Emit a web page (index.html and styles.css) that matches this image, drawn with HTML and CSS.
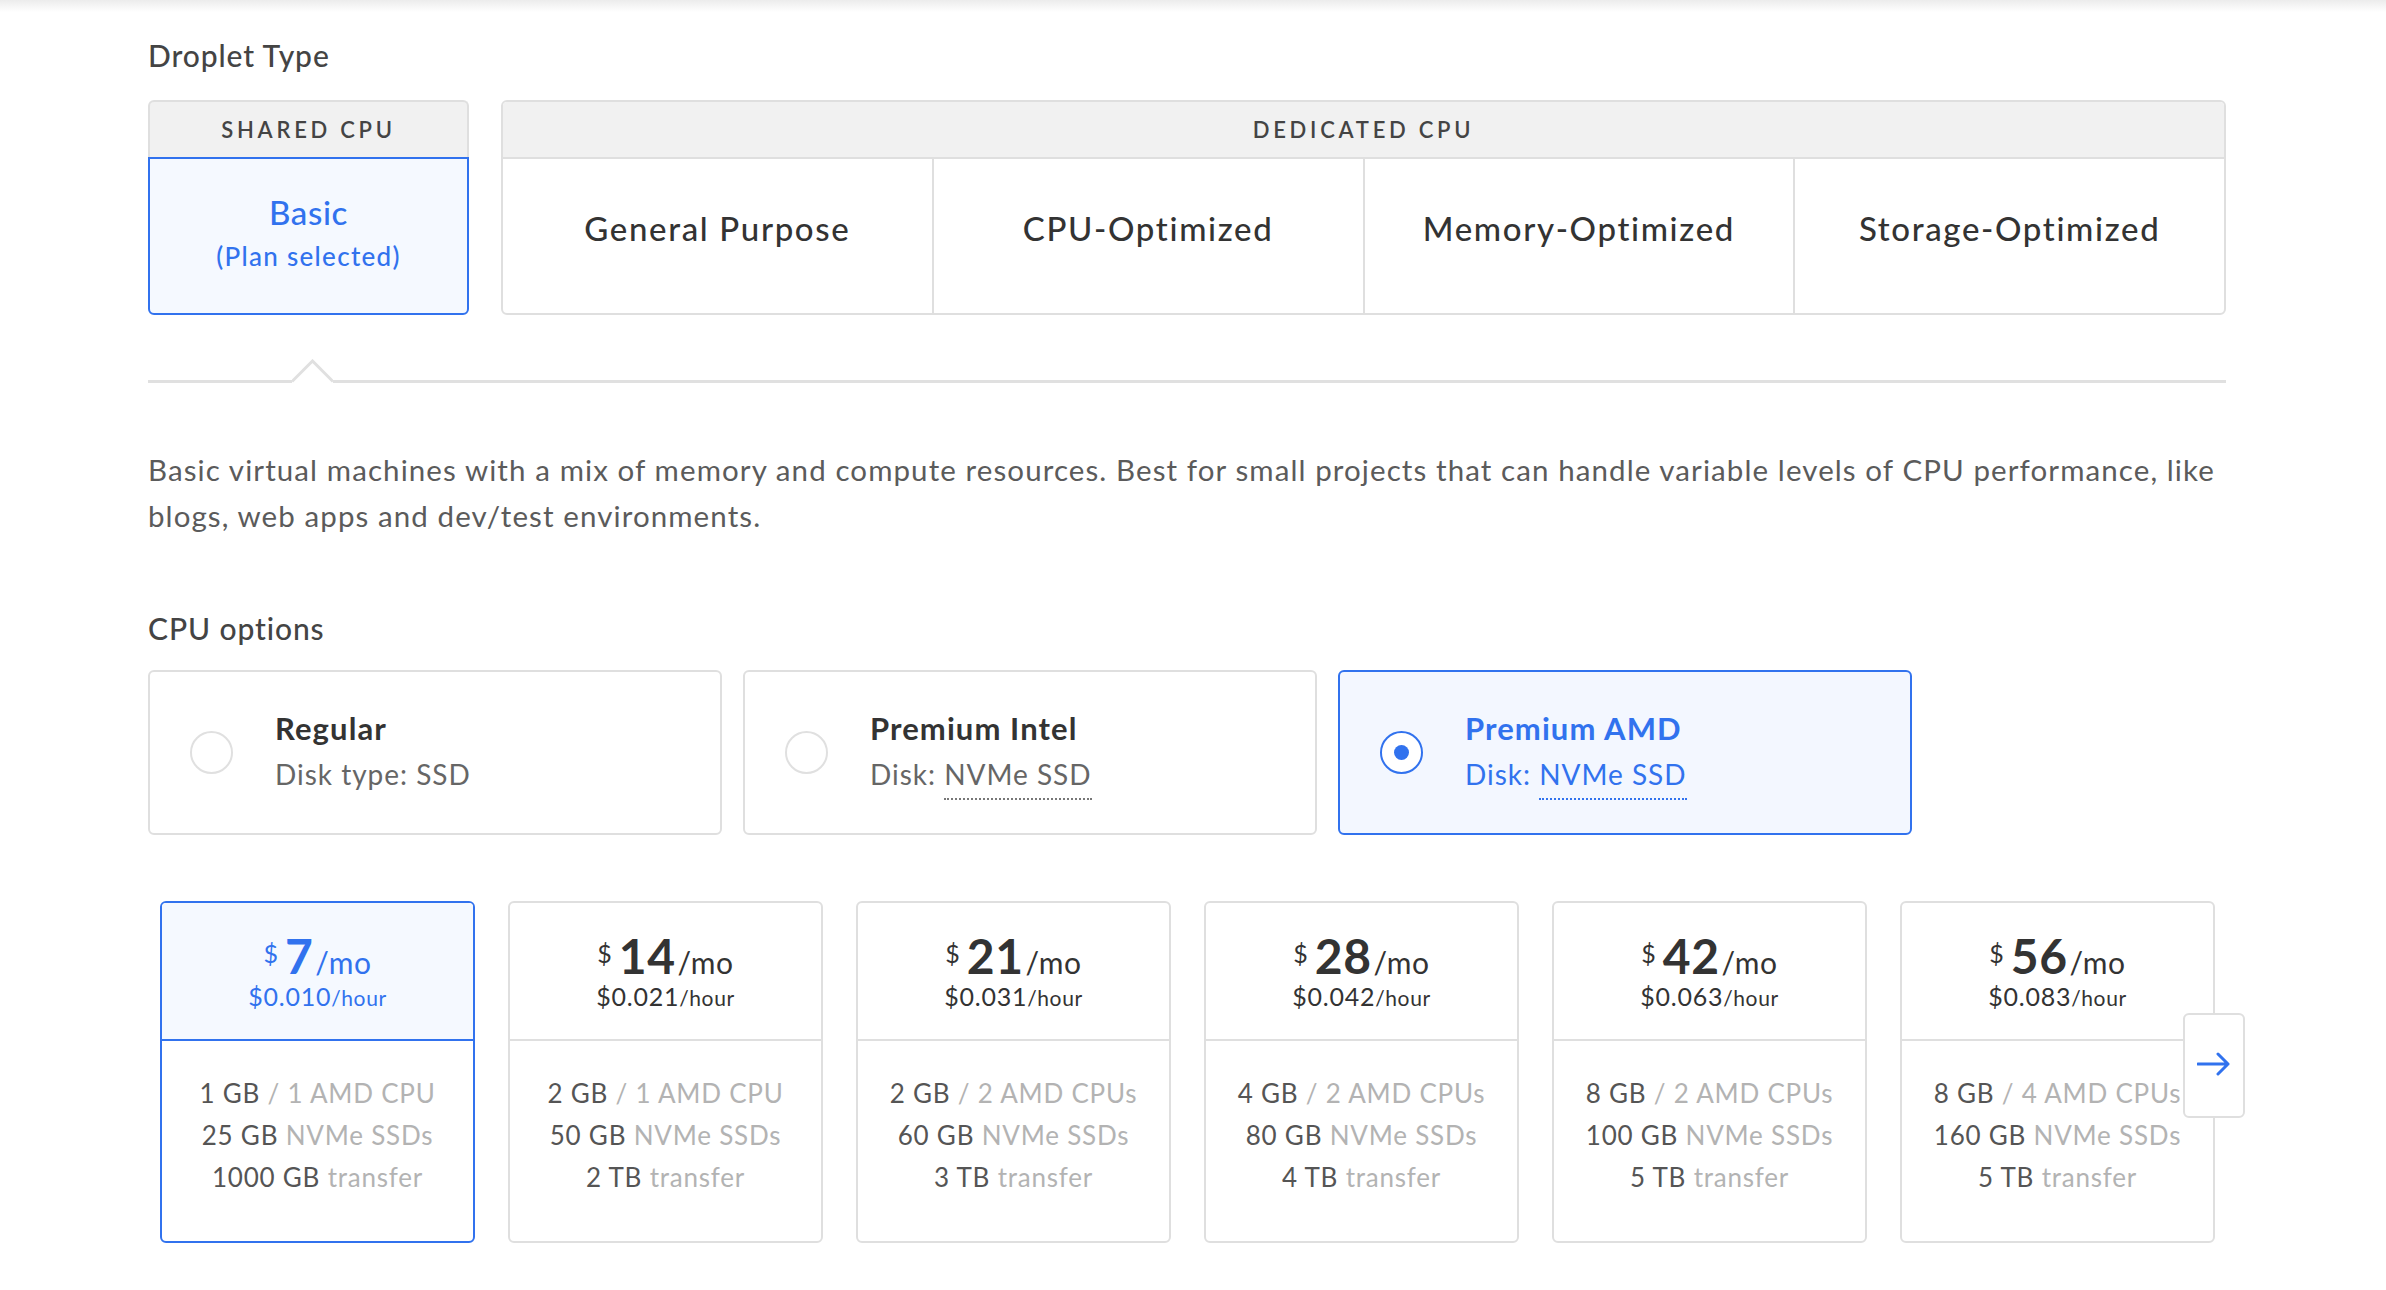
FILE: index.html
```html
<!DOCTYPE html>
<html lang="en">
<head>
<meta charset="utf-8">
<title>Droplet Type</title>
<link rel="stylesheet" href="styles.css">
</head>
<body>
<div class="topshade"></div>
<main class="page">
  <h2 class="section-title first">Droplet Type</h2>

  <div class="type-row">
    <div class="type-group shared">
      <div class="group-head">SHARED CPU</div>
      <div class="type-cell selected">
        <div class="cell-name">Basic</div>
        <div class="cell-note">(Plan selected)</div>
      </div>
    </div>
    <div class="type-group dedicated">
      <div class="group-head">DEDICATED CPU</div>
      <div class="cells">
        <div class="type-cell"><div class="cell-name">General Purpose</div></div>
        <div class="type-cell"><div class="cell-name">CPU-Optimized</div></div>
        <div class="type-cell"><div class="cell-name">Memory-Optimized</div></div>
        <div class="type-cell"><div class="cell-name">Storage-Optimized</div></div>
      </div>
    </div>
  </div>

  <div class="pointer">
    <div class="pointer-line short"></div>
    <svg class="caret" width="41" height="24" viewBox="0 0 41 24"><polyline points="0,22.5 20.5,2 41,22.5" fill="none" stroke="#e0e0e0" stroke-width="3"/></svg>
    <div class="pointer-line long"></div>
  </div>

  <p class="desc">Basic virtual machines with a mix of memory and compute resources. Best for small projects that can handle variable levels of CPU performance, like<br>blogs, web apps and dev/test environments.</p>

  <h2 class="section-title">CPU options</h2>

  <div class="cpu-row">
    <div class="cpu-card">
      <span class="radio"></span>
      <div class="cpu-text">
        <div class="cpu-title">Regular</div>
        <div class="cpu-sub">Disk type: SSD</div>
      </div>
    </div>
    <div class="cpu-card">
      <span class="radio"></span>
      <div class="cpu-text">
        <div class="cpu-title">Premium Intel</div>
        <div class="cpu-sub">Disk: <span class="dotted">NVMe SSD</span></div>
      </div>
    </div>
    <div class="cpu-card active">
      <span class="radio"></span>
      <div class="cpu-text">
        <div class="cpu-title">Premium AMD</div>
        <div class="cpu-sub">Disk: <span class="dotted">NVMe SSD</span></div>
      </div>
    </div>
  </div>

  <div class="plans">
    <div class="plan selected">
      <div class="plan-head">
        <div class="price"><span class="cur">$</span><span class="amt">7</span><span class="per">/mo</span></div>
        <div class="hourly"><span class="hr">$0.010</span><span class="hu">/hour</span></div>
      </div>
      <div class="plan-body">
        <div class="spec"><b>1 GB</b> / 1 AMD CPU</div>
        <div class="spec"><b>25 GB</b> NVMe SSDs</div>
        <div class="spec"><b>1000 GB</b> transfer</div>
      </div>
    </div>
    <div class="plan">
      <div class="plan-head">
        <div class="price"><span class="cur">$</span><span class="amt">14</span><span class="per">/mo</span></div>
        <div class="hourly"><span class="hr">$0.021</span><span class="hu">/hour</span></div>
      </div>
      <div class="plan-body">
        <div class="spec"><b>2 GB</b> / 1 AMD CPU</div>
        <div class="spec"><b>50 GB</b> NVMe SSDs</div>
        <div class="spec"><b>2 TB</b> transfer</div>
      </div>
    </div>
    <div class="plan">
      <div class="plan-head">
        <div class="price"><span class="cur">$</span><span class="amt">21</span><span class="per">/mo</span></div>
        <div class="hourly"><span class="hr">$0.031</span><span class="hu">/hour</span></div>
      </div>
      <div class="plan-body">
        <div class="spec"><b>2 GB</b> / 2 AMD CPUs</div>
        <div class="spec"><b>60 GB</b> NVMe SSDs</div>
        <div class="spec"><b>3 TB</b> transfer</div>
      </div>
    </div>
    <div class="plan">
      <div class="plan-head">
        <div class="price"><span class="cur">$</span><span class="amt">28</span><span class="per">/mo</span></div>
        <div class="hourly"><span class="hr">$0.042</span><span class="hu">/hour</span></div>
      </div>
      <div class="plan-body">
        <div class="spec"><b>4 GB</b> / 2 AMD CPUs</div>
        <div class="spec"><b>80 GB</b> NVMe SSDs</div>
        <div class="spec"><b>4 TB</b> transfer</div>
      </div>
    </div>
    <div class="plan">
      <div class="plan-head">
        <div class="price"><span class="cur">$</span><span class="amt">42</span><span class="per">/mo</span></div>
        <div class="hourly"><span class="hr">$0.063</span><span class="hu">/hour</span></div>
      </div>
      <div class="plan-body">
        <div class="spec"><b>8 GB</b> / 2 AMD CPUs</div>
        <div class="spec"><b>100 GB</b> NVMe SSDs</div>
        <div class="spec"><b>5 TB</b> transfer</div>
      </div>
    </div>
    <div class="plan">
      <div class="plan-head">
        <div class="price"><span class="cur">$</span><span class="amt">56</span><span class="per">/mo</span></div>
        <div class="hourly"><span class="hr">$0.083</span><span class="hu">/hour</span></div>
      </div>
      <div class="plan-body">
        <div class="spec"><b>8 GB</b> / 4 AMD CPUs</div>
        <div class="spec"><b>160 GB</b> NVMe SSDs</div>
        <div class="spec"><b>5 TB</b> transfer</div>
      </div>
    </div>
    <button class="next" type="button" aria-label="Next">
      <svg width="34" height="24" viewBox="0 0 34 24"><path d="M1 12 H31 M21 2 L31 12 L21 22" fill="none" stroke="#3172ee" stroke-width="3" stroke-linecap="round" stroke-linejoin="round"/></svg>
    </button>
  </div>
</main>
</body>
</html>
```

FILE: styles.css
```css
html, body {
  margin: 0;
  padding: 0;
  background: #ffffff;
}

body {
  font-family: "Lato", "Liberation Sans", sans-serif;
  color: #333333;
  position: relative;
}

.topshade {
  position: absolute;
  left: 0;
  top: 0;
  width: 100%;
  height: 12px;
  background: linear-gradient(#ececec, rgba(255, 255, 255, 0));
}

.page {
  width: 2078px;
  padding: 36px 0 40px 148px;
}

.section-title {
  margin: 0;
  font-size: 30px;
  line-height: 38px;
  font-weight: 500;
  letter-spacing: 0.03em;
  color: #444444;
}

/* ---------- Droplet type tabs ---------- */
.type-row {
  display: flex;
  gap: 32px;
  margin-top: 26px;
}

.type-group {
  display: flex;
  flex-direction: column;
  box-sizing: border-box;
}

.shared {
  width: 321px;
}

.dedicated {
  flex: 1;
  border: 2px solid #dfdfdf;
  border-radius: 6px;
  overflow: hidden;
}

.group-head {
  height: 55px;
  line-height: 55px;
  background: #f1f1f1;
  text-align: center;
  font-size: 22px;
  font-weight: 600;
  letter-spacing: 0.17em;
  color: #444444;
}

.shared .group-head {
  border: 2px solid #dfdfdf;
  border-bottom: none;
  border-radius: 6px 6px 0 0;
}

.dedicated .group-head {
  border-bottom: 2px solid #dfdfdf;
}

.cells {
  display: flex;
  height: 154px;
}

.type-cell {
  flex: 1;
  display: flex;
  flex-direction: column;
  align-items: center;
  justify-content: center;
  padding-bottom: 16px;
  box-sizing: border-box;
}

.cells .type-cell + .type-cell {
  border-left: 2px solid #dfdfdf;
}

.cell-name {
  font-size: 33px;
  line-height: 42px;
  font-weight: 500;
  letter-spacing: 0.05em;
  color: #333333;
}

.type-cell.selected {
  height: 158px;
  border: 2px solid #3172ee;
  border-radius: 0 0 6px 6px;
  background: #f5f9ff;
  padding-bottom: 8px;
}

.type-cell.selected .cell-name {
  color: #3172ee;
  font-size: 33px;
  line-height: 48px;
  letter-spacing: 0.02em;
}

.cell-note {
  font-size: 26px;
  line-height: 40px;
  font-weight: 500;
  letter-spacing: 0.05em;
  color: #3172ee;
}

/* ---------- pointer ---------- */
.pointer {
  display: flex;
  align-items: flex-end;
  height: 24px;
  margin-top: 44px;
}

.pointer-line {
  height: 3px;
  background: #e0e0e0;
}

.pointer-line.short {
  width: 144px;
}

.pointer-line.long {
  flex: 1;
}

.caret {
  display: block;
  flex: none;
}

/* ---------- description ---------- */
.desc {
  margin: 64px 0 0;
  font-size: 29.5px;
  line-height: 46px;
  letter-spacing: 0.037em;
  color: #5b5b5b;
  white-space: nowrap;
}

.desc + .section-title {
  margin-top: 70px;
}

/* ---------- CPU options ---------- */
.cpu-row {
  display: flex;
  gap: 21px;
  margin-top: 23px;
}

.cpu-card {
  width: 574px;
  height: 165px;
  box-sizing: border-box;
  border: 2px solid #dfdfdf;
  border-radius: 6px;
  display: flex;
  align-items: center;
  padding-left: 40px;
  gap: 42px;
  background: #ffffff;
}

.radio {
  width: 43px;
  height: 43px;
  box-sizing: border-box;
  border: 2px solid #e0e0e0;
  border-radius: 50%;
  background: #ffffff;
  display: flex;
  align-items: center;
  justify-content: center;
  flex: none;
}

.cpu-text {
  display: flex;
  flex-direction: column;
  margin-top: -3px;
}

.cpu-title {
  font-size: 31px;
  line-height: 46px;
  font-weight: 700;
  letter-spacing: 0.035em;
  color: #333333;
}

.cpu-sub {
  font-size: 28px;
  line-height: 46px;
  letter-spacing: 0.035em;
  color: #666666;
}

.dotted {
  border-bottom: 2px dotted #777777;
  padding-bottom: 7px;
}

.cpu-card.active {
  border-color: #3172ee;
  background: #f3f7ff;
}

.cpu-card.active .radio {
  border-color: #3172ee;
}

.cpu-card.active .radio::after {
  content: "";
  width: 15px;
  height: 15px;
  border-radius: 50%;
  background: #3172ee;
}

.cpu-card.active .cpu-title,
.cpu-card.active .cpu-sub {
  color: #3172ee;
}

.cpu-card.active .dotted {
  border-bottom-color: #3172ee;
}

/* ---------- plans ---------- */
.plans {
  position: relative;
  display: flex;
  gap: 33px;
  margin-top: 66px;
  padding-left: 12px;
}

.plan {
  width: 315px;
  height: 342px;
  box-sizing: border-box;
  border: 2px solid #dfdfdf;
  border-radius: 6px;
  background: #ffffff;
  text-align: center;
  overflow: hidden;
}

.plan-head {
  padding: 22px 0 28px;
  border-bottom: 2px solid #dfdfdf;
  color: #333333;
}

.price {
  height: 56px;
  line-height: 56px;
  white-space: nowrap;
}

.cur {
  font-size: 25px;
  vertical-align: 11px;
  margin-right: 7px;
}

.amt {
  font-size: 48px;
  font-weight: 700;
  letter-spacing: 0.01em;
}

.per {
  font-size: 30px;
  letter-spacing: 0.02em;
  margin-left: 2px;
}

.hourly {
  height: 30px;
  line-height: 30px;
  white-space: nowrap;
}

.hr {
  font-size: 25px;
  letter-spacing: 0.03em;
}

.hu {
  font-size: 21px;
  letter-spacing: 0.03em;
}

.plan-body {
  padding-top: 31px;
}

.spec {
  font-size: 26px;
  line-height: 42px;
  letter-spacing: 0.03em;
  color: #b3b3b3;
  white-space: nowrap;
}

.spec b {
  font-weight: 400;
  color: #555555;
}

.plan.selected {
  border-color: #3172ee;
}

.plan.selected .plan-head {
  background: #f5f9ff;
  border-bottom-color: #3172ee;
  color: #3172ee;
}

.next {
  position: absolute;
  left: 2035px;
  top: 112px;
  width: 62px;
  height: 105px;
  box-sizing: border-box;
  border: 2px solid #dfdfdf;
  border-radius: 6px;
  background: #ffffff;
  padding: 0;
  display: flex;
  align-items: center;
  justify-content: center;
}

.next svg {
  display: block;
  margin-top: -3px;
}
```
